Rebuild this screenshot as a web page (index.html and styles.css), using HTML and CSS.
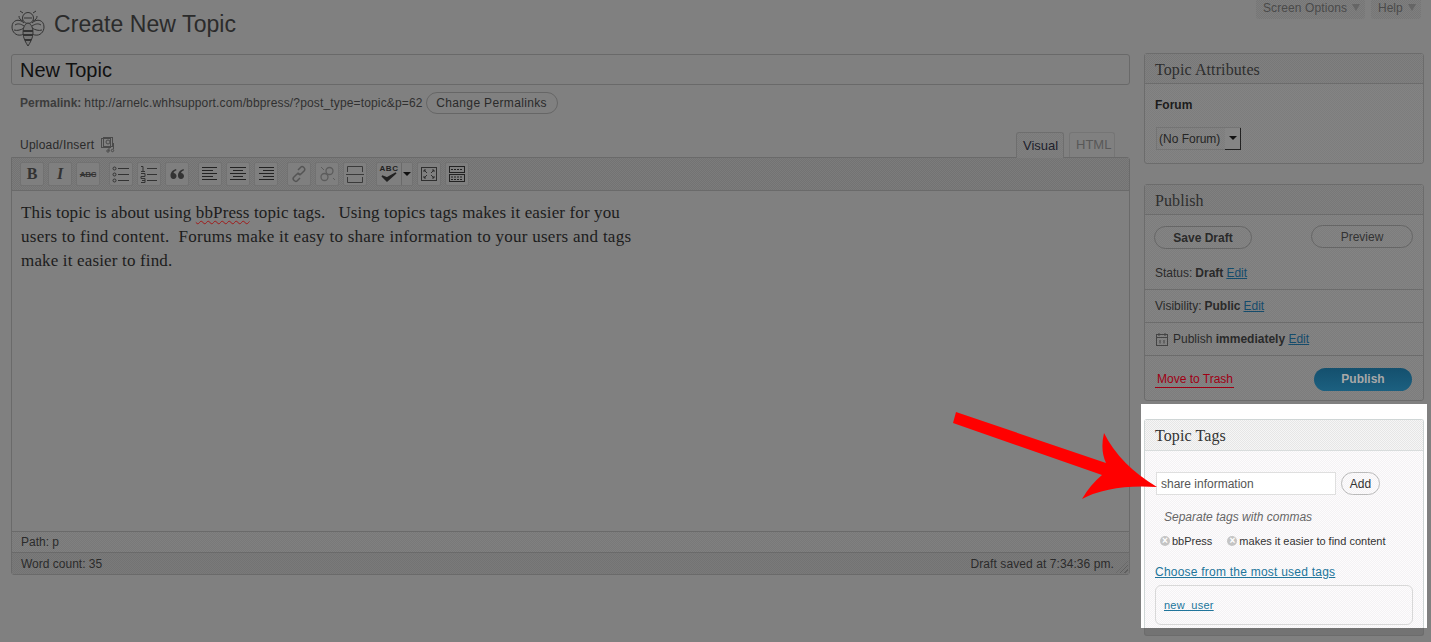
FILE: index.html
```html
<!DOCTYPE html>
<html lang="en">
<head>
<meta charset="utf-8">
<title>Create New Topic</title>
<link rel="stylesheet" href="styles.css">
</head>
<body>
<header class="top">
  <div class="title">
    <svg class="bee" width="34" height="38" viewBox="0 0 34 38" fill="none" stroke="#333" stroke-width="1">
      <path d="M12 3 9 1M22 3l3-2"/>
      <circle cx="17" cy="8" r="5.5"/>
      <path d="M13 8h8M12 11c-3-1-4-3-4-5M22 11c3-1 4-3 4-5"/>
      <path d="M13 13C8 8 1 10 1 17c0 5 4 9 9 8 2 0 4-3 5-6M21 13c5-5 12-3 12 4 0 5-4 9-9 8-2 0-4-3-5-6"/>
      <path d="M4 15c3-2 6-1 9 1M30 15c-3-2-6-1-9 1M3 20c3 1 7 0 10-2M31 20c-3 1-7 0-10-2"/>
      <path d="M17 13c-4 1-5 6-5 10 0 5 3 10 5 13 2-3 5-8 5-13 0-4-1-9-5-10Z" fill="#777"/>
      <path d="M12 21h10M12 25h10M14 30h6" stroke-width="2"/>
    </svg>
    <h1>Create New Topic</h1>
  </div>
  <nav class="meta">
    <span class="meta-tab meta-screen">Screen Options <i class="down"></i></span>
    <span class="meta-tab meta-help">Help <i class="down"></i></span>
  </nav>
</header>

<div class="columns">
  <main class="main">
    <div class="topic-title">New Topic</div>
    <div class="permalink">
      <b>Permalink:</b> <span class="perma-url">http://arnelc.whhsupport.com/bbpress/?post_type=topic&amp;p=62</span>
      <span class="btn perma-btn">Change Permalinks</span>
    </div>
    <div class="editor-head">
      <div class="upload">Upload/Insert
        <svg width="16" height="16" viewBox="0 0 16 16" fill="none" stroke="#4a4a4a" stroke-width="1"><rect x="1.500" y="1.500" width="9" height="9"/><rect x="3.500" y="0.500" width="9" height="9"/><circle cx="8" cy="5" r="2"/><path d="M13.500 6v6M9 10v4"/><circle cx="8" cy="14" r="1.200"/><circle cx="12.500" cy="13.500" r="1.200"/></svg>
      </div>
      <div class="tabs">
        <span class="tab tab-on">Visual</span>
        <span class="tab tab-off">HTML</span>
      </div>
    </div>
    <section class="editor">
      <div class="toolbar">
        <div class="group">
          <span class="tool t-b">B</span>
          <span class="tool t-i">I</span>
          <span class="tool t-s">ABC</span>
        </div>
        <div class="group">
          <span class="tool"><svg width="20" height="20" viewBox="0 0 20 20" fill="none" stroke="#333"><path d="M7 4.500h11M7 10.500h11M7 16.500h11"/><circle cx="3.500" cy="4.500" r="1.500"/><circle cx="3.500" cy="10.500" r="1.500"/><circle cx="3.500" cy="16.500" r="1.500"/></svg></span>
          <span class="tool"><svg width="20" height="20" viewBox="0 0 20 20" fill="none" stroke="#333"><path d="M8 4.500h10M8 10.500h10M8 16.500h10"/><path d="M2 2.500h2v5M2 7.500h4M2 9.500h4v3H2v2h4M2 14.500h4v4H2M3 16.500h3" stroke-width="1"/></svg></span>
          <span class="tool"><svg width="20" height="20" viewBox="0 0 20 20" fill="#333"><path d="M9 5C6 6 3.500 8 3.500 11.500c0 2 1 3.500 3 3.500s3-1.500 3-3-1.200-3-3-3C7 7.500 8 6.800 9.500 6.300ZM16.500 5c-3 1-5.500 3-5.500 6.500 0 2 1 3.500 3 3.500s3-1.500 3-3-1.200-3-3-3c.5-1.500 1.500-2.200 3-2.700Z"/></svg></span>
        </div>
        <div class="group">
          <span class="tool"><svg width="20" height="20" viewBox="0 0 20 20" stroke="#222"><path d="M2 3.500h15M2 6.500h11M2 9.500h15M2 12.500h11M2 15.500h15"/></svg></span>
          <span class="tool"><svg width="20" height="20" viewBox="0 0 20 20" stroke="#222"><path d="M2 3.500h16M5 6.500h10M2 9.500h16M5 12.500h10M2 15.500h16"/></svg></span>
          <span class="tool"><svg width="20" height="20" viewBox="0 0 20 20" stroke="#222"><path d="M3 3.500h15M7 6.500h11M3 9.500h15M7 12.500h11M3 15.500h15"/></svg></span>
        </div>
        <div class="group">
          <span class="tool"><svg width="20" height="20" viewBox="0 0 20 20" fill="none" stroke="#555" stroke-width="1.500"><path d="M9 6l3-3c1.500-1.500 5 1.500 3.500 3.500l-3 3c-1.500 1.500-3.500 0-3.500-1"/><path d="M11 14l-3 3c-1.500 1.500-5-1.500-3.500-3.500l3-3c1.500-1.500 3.500 0 3.500 1"/></svg></span>
          <span class="tool"><svg width="20" height="20" viewBox="0 0 20 20" fill="none" stroke="#5c5c5c" stroke-width="1.300"><circle cx="12.500" cy="7" r="3.500"/><circle cx="7.500" cy="13" r="3.500"/><path d="M4 3l3 3M16 14l2 2" stroke-width="1"/></svg></span>
          <span class="tool"><svg width="20" height="20" viewBox="0 0 20 20" fill="none" stroke="#3a3a3a"><path d="M2.500 8V2.500h15V8M1 10.500h18M2.500 13v5.500h15V13"/></svg></span>
        </div>
        <div class="group">
          <span class="tool tool-split"><svg class="spell" width="22" height="22" viewBox="0 0 22 22"><text x="11" y="8" text-anchor="middle" class="spell-text">ABC</text><path d="M4 13l5 5 9-8-9 5Z" fill="#222" stroke="#222" stroke-width="1.500"/></svg></span>
          <span class="tool tool-drop"><i class="caret"></i></span>
          <span class="tool"><svg width="20" height="20" viewBox="0 0 20 20" fill="none" stroke="#2f2f2f"><rect x="2.500" y="3.500" width="15" height="13"/><path d="M5 6l3 3M5 6h2M5 6v2M15 6l-3 3M15 6h-2M15 6v2M5 14l3-3M5 14h2M5 14v-2M15 14l-3-3M15 14h-2M15 14v-2"/></svg></span>
          <span class="tool"><svg width="20" height="20" viewBox="0 0 20 20" fill="none" stroke="#222"><rect x="2.500" y="2.500" width="15" height="6"/><rect x="2.500" y="10.500" width="15" height="7"/><path d="M4 5.500h12M4 13h12M4 15.500h12" stroke-dasharray="2 1"/></svg></span>
        </div>
      </div>
      <div class="content">
        <p><span class="line l1">This topic is about using <span class="spell-err">bbPress</span> topic tags.&nbsp;&nbsp; Using topics tags makes it easier for you</span><span class="line l2">users to find content.&nbsp; Forums make it easy to share information to your users and tags</span><span class="line">make it easier to find.</span></p>
      </div>
      <div class="path">Path: p</div>
      <div class="status">
        <span>Word count: 35</span>
        <span class="saved">Draft saved at 7:34:36 pm.</span>
        <i class="grip"></i>
      </div>
    </section>
  </main>

  <aside class="side">
    <section class="panel panel-attrs">
      <h3 class="panel-head">Topic Attributes</h3>
      <div class="attrs">
        <strong class="forum-label">Forum</strong>
        <span class="select">(No Forum)<i class="select-arrow"><i class="caret"></i></i></span>
      </div>
    </section>

    <section class="panel panel-publish">
      <h3 class="panel-head">Publish</h3>
      <div class="pub-actions">
        <span class="btn save">Save Draft</span>
        <span class="btn preview">Preview</span>
      </div>
      <div class="pub-row pub-status">Status: <b>Draft</b> <a href="#">Edit</a></div>
      <div class="pub-row">Visibility: <b>Public</b> <a href="#">Edit</a></div>
      <div class="pub-row pub-date">
        <svg width="14" height="14" viewBox="0 0 14 14" fill="none" stroke="#444"><rect x="1.500" y="2.500" width="11" height="11"/><path d="M1.500 5.500h11M4 1v3M10 1v3M5 8v3.500M9 8v3.500"/></svg>
        <span>Publish <b>immediately</b> <a href="#">Edit</a></span>
      </div>
      <div class="pub-foot">
        <a class="trash" href="#">Move to Trash</a>
        <span class="btn publish">Publish</span>
      </div>
    </section>

    <div class="highlight">
      <section class="panel panel-tags">
        <h3 class="panel-head">Topic Tags</h3>
        <div class="tag-add">
          <span class="tag-input">share information</span>
          <span class="btn add">Add</span>
        </div>
        <p class="hint">Separate tags with commas</p>
        <div class="chips">
          <span class="chip"><i class="x">×</i>bbPress</span>
          <span class="chip"><i class="x">×</i>makes it easier to find content</span>
        </div>
        <a class="choose" href="#">Choose from the most used tags</a>
        <div class="cloud"><a href="#">new_user</a></div>
      </section>
      <div class="tail"></div>
    </div>
  </aside>
</div>

<svg class="arrow" width="210" height="95" viewBox="950 408 210 95"><path d="M956 412 1106 463Q1100 450 1104 433 1120 465 1157 487 1110 484 1082 499 1090 485 1102 475L953 423Z" fill="#f00"/></svg>
</body>
</html>
```

FILE: styles.css
```css
* { box-sizing: border-box; }
html, body { margin: 0; height: 642px; overflow: hidden; }
body {
  background: #808080;
  font: 12px/16px "Liberation Sans", Arial, sans-serif;
  color: #222;
  position: relative;
}
a { color: #154c6c; }

.top {
  height: 53px;
  display: flex;
  justify-content: space-between;
  align-items: flex-start;
  padding: 0 10px 0 11px;
}
.title { display: flex; align-items: flex-start; gap: 9px; padding-top: 10px; }
.bee { display: block; }
h1 {
  margin: 0;
  font: 400 23px/28px "Liberation Sans", Arial, sans-serif;
  color: #2b2b2b;
  letter-spacing: .06px;
}
.meta { display: flex; gap: 6px; }
.meta-tab {
  height: 19px;
  padding: 0 7px 4px;
  display: flex;
  align-items: center;
  gap: 5px;
  white-space: nowrap;
  color: #4a4a4a;
  border-radius: 0 0 3px 3px;
  background: repeating-conic-gradient(#767676 0 25%, #7f7f7f 0 50%) 0 0 / 2px 2px;
}
.meta-screen { width: 109px; letter-spacing: .1px; }
.meta-help { width: 50px; }
.down {
  width: 0; height: 0;
  border: 4px solid transparent;
  border-top: 7px solid #656565;
  border-bottom: 0;
}

.columns {
  display: grid;
  grid-template-columns: 1119px 280px;
  gap: 14px;
  padding-left: 11px;
}
.main { padding-top: 1px; }
.topic-title {
  height: 31px;
  border: 1px solid #696969;
  border-radius: 3px;
  padding-left: 8px;
  font-size: 20px;
  line-height: 31px;
  color: #111;
}
.permalink {
  margin-top: 7px;
  height: 22px;
  padding-left: 9px;
  display: flex;
  align-items: center;
  gap: 3px;
  color: #303030;
}
.permalink b { color: #3c3c3c; }
.perma-url { letter-spacing: .15px; }
.btn {
  display: flex;
  align-items: center;
  justify-content: center;
  border: 1px solid #666;
  border-radius: 12px;
  color: #222;
}
.perma-btn { width: 132px; height: 22px; color: #2a2a2a; letter-spacing: .35px; }

.editor-head {
  height: 43px;
  display: flex;
  justify-content: space-between;
  align-items: flex-end;
  padding: 0 15px 0 9px;
}
.upload {
  display: flex;
  align-items: center;
  gap: 6px;
  padding-bottom: 4px;
  color: #2a2a2a;
  letter-spacing: .22px;
}
.tabs { display: flex; gap: 5px; align-items: flex-start; margin-bottom: -1px; position: relative; }
.tab {
  height: 26px;
  padding: 0 6px;
  border: 1px solid #6e6e6e;
  border-bottom: 0;
  border-radius: 3px 3px 0 0;
  display: flex;
  align-items: center;
  font-size: 13px;
}
.tab-on {
  width: 48px;
  color: #20202c;
  background: repeating-conic-gradient(#7a7a7a 0 25%, #808080 0 50%) 0 0 / 2px 2px;
}
.tab-off { width: 46px; height: 25px; color: #585858; border-color: #757575; }

.editor {
  height: 418px;
  border: 1px solid #6a6a6a;
  border-radius: 0 3px 3px 3px;
  display: flex;
  flex-direction: column;
}
.toolbar {
  height: 33px;
  display: flex;
  gap: 9px;
  padding: 4px 0 0 8px;
  border-bottom: 1px solid #6a6a6a;
  background: repeating-conic-gradient(#737373 0 25%, #7c7c7c 0 50%) 0 0 / 2px 2px;
}
.group { display: flex; gap: 4px; }
.tool {
  width: 24px;
  height: 24px;
  display: flex;
  align-items: center;
  justify-content: center;
  background: #7f7f7f;
  border: 1px solid #727272;
  border-radius: 2px;
  color: #333;
}
.t-b { font: 700 16px "Liberation Serif", serif; }
.t-i { font: italic 700 16px "Liberation Serif", serif; }
.t-s { font: 700 8px "Liberation Sans", sans-serif; text-decoration: line-through; letter-spacing: -.3px; }
.tool-split { border-right: 0; border-radius: 2px 0 0 2px; width: 25px; }
.tool-drop { width: 12px; margin-left: -4px; border-left: 1px solid #6a6a6a; border-radius: 0 2px 2px 0; }
.spell-text { font: 700 8px "Liberation Sans", sans-serif; letter-spacing: .5px; fill: #222; }
.caret {
  display: block;
  width: 0; height: 0;
  border: 4px solid transparent;
  border-top: 4px solid #111;
  border-bottom: 0;
}

.content {
  flex: 1;
  padding: 10px 9px 0;
  font: 17px/24px "Liberation Serif", "Times New Roman", serif;
  letter-spacing: .16px;
  color: #1c1c1c;
}
.content p { margin: 0; }
.line { display: block; }
.l1 { letter-spacing: .13px; }
.l2 { letter-spacing: .27px; }
.spell-err { text-decoration: underline wavy #a01818 1px; text-underline-offset: 2px; }

.path {
  height: 22px;
  padding-left: 9px;
  display: flex;
  align-items: center;
  color: #2b2b2b;
  border-top: 1px solid #6a6a6a;
  border-bottom: 1px solid #6a6a6a;
  background: repeating-conic-gradient(#797979 0 25%, #808080 0 50%) 0 0 / 2px 2px;
}
.status {
  height: 21px;
  padding: 0 15px 0 9px;
  display: flex;
  align-items: center;
  justify-content: space-between;
  color: #2b2b2b;
  position: relative;
  background: repeating-conic-gradient(#737373 0 25%, #7a7a7a 0 50%) 0 0 / 2px 2px;
}
.saved { letter-spacing: .08px; }
.grip {
  position: absolute;
  right: 1px; bottom: 1px;
  width: 12px; height: 12px;
  background: repeating-linear-gradient(135deg, transparent 0 2px, #5e5e5e 2px 3px);
  clip-path: polygon(100% 0, 100% 100%, 0 100%);
}

.side { display: flex; flex-direction: column; }
.panel {
  border: 1px solid #6c6c6c;
  border-radius: 3px;
  background: repeating-conic-gradient(#7d7d7d 0 25%, #848484 0 50%) 0 0 / 2px 2px;
}
.panel-head {
  margin: 0;
  height: 30px;
  padding: 2px 10px 0;
  display: flex;
  align-items: center;
  font: 400 16px "Liberation Serif", "Times New Roman", serif;
  letter-spacing: .1px;
  color: #2e2e2e;
  border-bottom: 1px solid #6c6c6c;
  background: repeating-conic-gradient(#787878 0 25%, #808080 0 50%) 0 0 / 2px 2px;
}
.panel-attrs { height: 111px; }
.attrs { padding: 13px 10px 0; display: flex; flex-direction: column; align-items: flex-start; }
.forum-label { color: #1c1c1c; }
.select {
  margin: 14px 0 0 1px;
  width: 85px;
  height: 23px;
  display: flex;
  align-items: center;
  justify-content: space-between;
  padding-left: 2px;
  border: 1px solid #747474;
  color: #242424;
}
.select-arrow {
  width: 16px;
  height: 22px;
  display: flex;
  align-items: center;
  justify-content: center;
  border-right: 1px solid #222;
  border-bottom: 1px solid #222;
  margin-right: -1px;
  background: #858585;
}

.panel-publish { height: 217px; margin-top: 20px; }
.pub-actions {
  height: 42px;
  padding: 10px 10px 0 9px;
  display: flex;
  justify-content: space-between;
  align-items: flex-start;
}
.save { width: 98px; height: 23px; font-weight: 700; color: #2a2a2a; margin-top: 1px; }
.preview { width: 102px; height: 23px; color: #333; }
.pub-row {
  height: 33px;
  padding: 0 10px;
  display: flex;
  align-items: center;
  gap: 3px;
  color: #2a2a2a;
  border-bottom: 1px solid #6c6c6c;
}
.pub-date { gap: 4px; }
.pub-date svg { display: block; }
.pub-foot {
  height: 44px;
  padding: 0 11px 0 10px;
  display: flex;
  justify-content: space-between;
  align-items: center;
}
.trash {
  color: #a00014;
  text-decoration: none;
  border-bottom: 1px solid #a00014;
  padding: 0 1px 0 2px;
  margin-top: 2px;
}
.publish {
  width: 98px;
  height: 23px;
  border: 0;
  background: linear-gradient(#14506e, #1c6080);
  color: #a8a8a8;
  font-weight: 700;
  margin-top: 2px;
}

.highlight {
  position: relative;
  margin: 3px -3px 0;
  height: 224px;
  padding: 15px 3px 0;
  background: #fff;
}
.panel-tags {
  height: 209px;
  border-color: #cfd6d6;
  border-bottom: 0;
  border-radius: 3px 3px 0 0;
  background: repeating-conic-gradient(#fdfcfd 0 25%, #f4f2f4 0 50%) 0 0 / 2px 2px;
}
.panel-tags .panel-head {
  height: 31px;
  border-color: #d8dcdc;
  color: #333;
  background: repeating-conic-gradient(#e6e6e6 0 25%, #f6f6f6 0 50%) 0 0 / 2px 2px;
}
.tag-add { display: flex; gap: 5px; padding: 21px 0 0 11px; }
.tag-input {
  width: 180px;
  height: 23px;
  padding-left: 4px;
  display: flex;
  align-items: center;
  background: #fff;
  border: 1px solid #dfdfdf;
  color: #555;
}
.add { width: 39px; height: 23px; border-color: #bbb; color: #333; }
.hint { margin: 14px 0 0 19px; font-style: italic; color: #666; }
.chips { display: flex; gap: 15px; margin: 8px 0 0 15px; font-size: 11px; color: #333; }
.chip { display: flex; align-items: center; gap: 2px; }
.x {
  width: 10px; height: 10px;
  border-radius: 50%;
  background: #c4c4c4;
  color: #fff;
  font: 700 10px/10px "Liberation Sans", sans-serif;
  text-align: center;
}
.choose { display: block; margin: 15px 0 0 10px; color: #21759b; letter-spacing: .23px; }
.cloud {
  margin: 5px 0 0 10px;
  width: 258px;
  height: 40px;
  padding: 11px 8px 0;
  border: 1px solid #d8d8d8;
  border-radius: 6px;
  font-size: 11px;
  letter-spacing: .25px;
}
.cloud a { color: #21759b; }
.tail {
  position: absolute;
  left: 3px; top: 100%;
  width: 280px;
  height: 8px;
  border: 1px solid #6c6c6c;
  border-top: 0;
  border-radius: 0 0 3px 3px;
  background: #737373;
}
.arrow { position: absolute; left: 950px; top: 408px; display: block; }
```
